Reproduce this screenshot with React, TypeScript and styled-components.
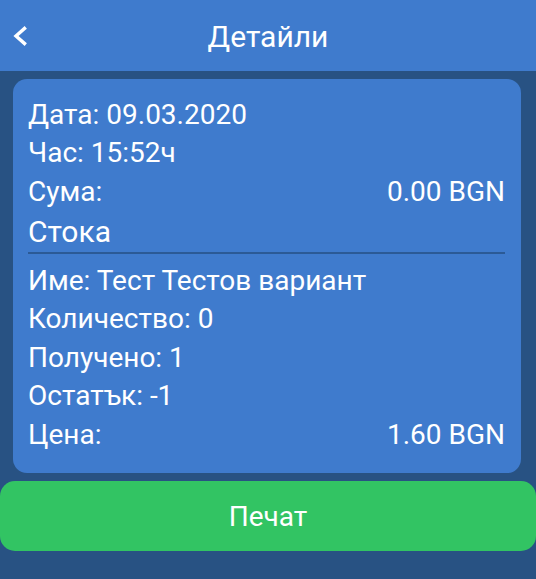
import React from "react";
import styled, { createGlobalStyle } from "styled-components";

const Global = createGlobalStyle`
  html, body { margin: 0; padding: 0; background: #285283; }
  body { font-family: Roboto, "Noto Sans", sans-serif; }
`;

const Page = styled.div`
  width: 536px;
  height: 579px;
  background: #285283;
  display: flex;
  flex-direction: column;
  overflow: hidden;
`;

const Header = styled.header`
  height: 71px;
  background: #3f7bcd;
  display: grid;
  grid-template-columns: 60px 1fr 60px;
  align-items: center;
  color: #fff;
`;

const Back = styled.button`
  background: none;
  border: 0;
  padding: 0 0 0 8px;
  height: 100%;
  display: flex;
  align-items: center;
  color: #fff;
  cursor: pointer;
`;

const Title = styled.h1`
  margin: 2px 0 0 0;
  text-align: center;
  font-weight: 400;
  font-size: 30px;
  color: #fff;
`;

const Content = styled.main`
  padding: 8px 0 0 0;
  display: flex;
  flex-direction: column;
  gap: 8px;
`;

const Card = styled.section`
  margin: 0 15px 0 13px;
  background: #3f7bcd;
  border-radius: 14px;
  padding: 16.5px 16px 19px 15px;
  display: flex;
  flex-direction: column;
  color: #fff;
`;

const Row = styled.div`
  display: flex;
  justify-content: space-between;
  font-size: 28px;
  line-height: 38.5px;
`;

const Section = styled.div`
  font-size: 30px;
  line-height: 41px;
  border-bottom: 2px solid #2b5a96;
  margin-bottom: 7.5px;
`;

const PrintButton = styled.button`
  height: 70px;
  border: 0;
  border-radius: 15px;
  background: #32c463;
  color: #fff;
  font-family: Roboto, sans-serif;
  font-size: 28px;
  cursor: pointer;
`;

const Chevron = () => (
  <svg width="24" height="24" viewBox="0 0 24 24" fill="none">
    <path d="M16.5 4.5 L8 12 L16.5 19.5" stroke="#fff" strokeWidth="3.4" strokeLinecap="square" />
  </svg>
);

export default function App() {
  return (
    <Page>
      <Global />
      <Header>
        <Back aria-label="Назад"><Chevron /></Back>
        <Title>Детайли</Title>
        <span />
      </Header>
      <Content>
        <Card>
          <Row><span>Дата: 09.03.2020</span></Row>
          <Row><span>Час: 15:52ч</span></Row>
          <Row><span>Сума:</span><span>0.00 BGN</span></Row>
          <Section>Стока</Section>
          <Row><span>Име: Тест Тестов вариант</span></Row>
          <Row><span>Количество: 0</span></Row>
          <Row><span>Получено: 1</span></Row>
          <Row><span>Остатък: -1</span></Row>
          <Row><span>Цена:</span><span>1.60 BGN</span></Row>
        </Card>
        <PrintButton>Печат</PrintButton>
      </Content>
    </Page>
  );
}
